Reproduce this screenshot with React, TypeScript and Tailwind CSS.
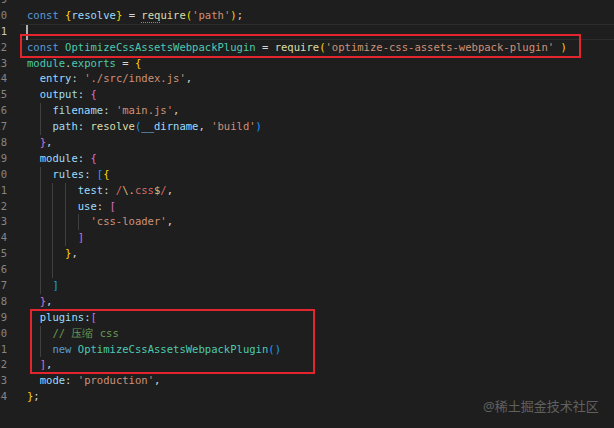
import React from 'react'

// token colours, VS Code dark+ with bracket pair colouring
const C = {
  p: 'text-[#d4d4d4]',
  kw: 'text-[#569cd6]',
  v: 'text-[#9cdcfe]',
  fn: 'text-[#dcdcaa]',
  s: 'text-[#ce9178]',
  cls: 'text-[#4ec9b0]',
  b1: 'text-[#ffd700]',
  b2: 'text-[#da70d6]',
  b3: 'text-[#179fff]',
  re: 'text-[#d16969]',
  esc: 'text-[#d7ba7d]',
  cm: 'text-[#6a9955]',
}

type Tok = [string, keyof typeof C]
type Line = { n: number; indent: number; guides: number[]; toks: Tok[]; cursor?: boolean; hint?: boolean }

const lines: Line[] = [
  { n: 9, indent: 0, guides: [], toks: [] },
  {
    n: 10, indent: 0, guides: [], hint: true,
    toks: [['const', 'kw'], [' ', 'p'], ['{', 'b1'], ['resolve', 'v'], ['}', 'b1'], [' = ', 'p'], ['require', 'fn'], ['(', 'b1'], ["'path'", 's'], [')', 'b1'], [';', 'p']],
  },
  { n: 11, indent: 0, guides: [], toks: [], cursor: true },
  {
    n: 12, indent: 0, guides: [],
    toks: [['const', 'kw'], [' ', 'p'], ['OptimizeCssAssetsWebpackPlugin', 'cls'], [' = ', 'p'], ['require', 'fn'], ['(', 'b1'], ["'optimize-css-assets-webpack-plugin'", 's'], [' ', 'p'], [')', 'b1']],
  },
  { n: 13, indent: 0, guides: [], toks: [['module', 'cls'], ['.', 'p'], ['exports', 'cls'], [' = ', 'p'], ['{', 'b1']] },
  { n: 14, indent: 2, guides: [], toks: [['entry', 'v'], [': ', 'p'], ["'./src/index.js'", 's'], [',', 'p']] },
  { n: 15, indent: 2, guides: [], toks: [['output', 'v'], [': ', 'p'], ['{', 'b2']] },
  { n: 16, indent: 4, guides: [2], toks: [['filename', 'v'], [': ', 'p'], ["'main.js'", 's'], [',', 'p']] },
  {
    n: 17, indent: 4, guides: [2],
    toks: [['path', 'v'], [': ', 'p'], ['resolve', 'fn'], ['(', 'b3'], ['__dirname', 'v'], [', ', 'p'], ["'build'", 's'], [')', 'b3']],
  },
  { n: 18, indent: 2, guides: [], toks: [['}', 'b2'], [',', 'p']] },
  { n: 19, indent: 2, guides: [], toks: [['module', 'v'], [': ', 'p'], ['{', 'b2']] },
  { n: 20, indent: 4, guides: [2], toks: [['rules', 'v'], [': ', 'p'], ['[', 'b3'], ['{', 'b1']] },
  {
    n: 21, indent: 8, guides: [2, 4, 6],
    toks: [['test', 'v'], [': ', 'p'], ['/', 're'], ['\\.', 'esc'], ['css', 're'], ['$', 'esc'], ['/', 're'], [',', 'p']],
  },
  { n: 22, indent: 8, guides: [2, 4, 6], toks: [['use', 'v'], [': ', 'p'], ['[', 'b2']] },
  { n: 23, indent: 10, guides: [2, 4, 6, 8], toks: [["'css-loader'", 's'], [',', 'p']] },
  { n: 24, indent: 8, guides: [2, 4, 6], toks: [[']', 'b2']] },
  { n: 25, indent: 6, guides: [2, 4], toks: [['}', 'b1'], [',', 'p']] },
  { n: 26, indent: 6, guides: [2, 4], toks: [] },
  { n: 27, indent: 4, guides: [2], toks: [[']', 'b3']] },
  { n: 28, indent: 2, guides: [], toks: [['}', 'b2'], [',', 'p']] },
  { n: 29, indent: 2, guides: [], toks: [['plugins', 'v'], [':', 'p'], ['[', 'b2']] },
  { n: 30, indent: 4, guides: [2], toks: [['// 压缩 css', 'cm']] },
  { n: 31, indent: 4, guides: [2], toks: [['new', 'kw'], [' ', 'p'], ['OptimizeCssAssetsWebpackPlugin', 'cls'], ['(', 'b3'], [')', 'b3']] },
  { n: 32, indent: 2, guides: [], toks: [[']', 'b2'], [',', 'p']] },
  { n: 33, indent: 2, guides: [], toks: [['mode', 'v'], [': ', 'p'], ["'production'", 's'], [',', 'p']] },
  { n: 34, indent: 0, guides: [], toks: [['}', 'b1'], [';', 'p']] },
]

function Row({ line }: { line: Line }) {
  const units = []
  for (let c = 0; c < line.indent; c += 2) {
    units.push(
      <span
        key={c}
        className={
          line.guides.includes(c)
            ? 'inline-block w-[2ch] h-[15.9px] align-top border-l border-[#404040]'
            : 'inline-block w-[2ch] h-[15.9px] align-top'
        }
      />
    )
  }
  return (
    <div className="flex h-[15.9px]">
      <div
        className={
          line.cursor
            ? 'w-[7px] overflow-hidden flex justify-end text-[#c6c6c6]'
            : 'w-[7px] overflow-hidden flex justify-end text-[#858585]'
        }
      >
        {line.n}
      </div>
      <div
        className={
          line.cursor
            ? 'ml-[13px] flex-1 pl-[7px] whitespace-pre border-y border-[#2c2c2c]'
            : 'ml-[13px] flex-1 pl-[7px] whitespace-pre'
        }
      >
        {units}
        {line.cursor && <span className="inline-block w-[2px] h-[15px] -ml-[1px] align-top bg-[#aeafad]" />}
        {line.toks.map(([t, k], i) =>
          line.hint && t === 'require' ? (
            <span key={i} className={C[k]}>
              <span className="underline decoration-dotted decoration-[#8a8a8a] underline-offset-[3px]">req</span>
              uire
            </span>
          ) : (
            <span key={i} className={C[k]}>
              {t}
            </span>
          )
        )}
      </div>
    </div>
  )
}

export default function App() {
  return (
    <div className="relative w-[614px] h-[428px] overflow-hidden bg-[#1e1e1e] font-['DejaVu_Sans_Mono',monospace] text-[10.55px] leading-[15.9px]">
      <div className="-mt-[8px]">
        {lines.map((l) => (
          <Row key={l.n} line={l} />
        ))}
      </div>

      {/* annotation boxes */}
      <div className="absolute left-[20px] top-[34px] w-[561px] h-[24px] border-2 border-[#e3262d]" />
      <div className="absolute left-[30px] top-[309px] w-[285px] h-[65px] border-2 border-[#e3262d]" />

      <div className="absolute left-[483px] top-[397px] text-[13px] leading-[18px] text-[#606060] font-['Noto_Sans','Noto_Sans_CJK_SC',sans-serif]">
        @稀土掘金技术社区
      </div>
    </div>
  )
}
